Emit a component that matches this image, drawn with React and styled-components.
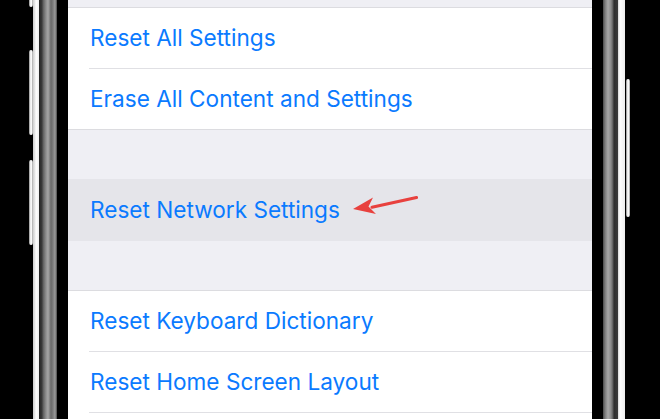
import React from "react";
import styled, { createGlobalStyle } from "styled-components";

const Global = createGlobalStyle`
  html, body { margin: 0; padding: 0; background: #000; }
  body { width: 660px; height: 419px; overflow: hidden; }
`;

const Page = styled.div`
  display: flex;
  width: 660px;
  height: 419px;
  background: #000;
  overflow: hidden;
`;

const LeftBezel = styled.div`
  position: relative;
  flex: 0 0 68px;
  height: 100%;
  background: linear-gradient(
    to right,
    #000 0px, #000 33px,
    #cfcfcf 33px, #e8e8e8 35px, #ffffff 36px, #f2f2f2 38.5px,
    #262626 39px, #3a3a3a 42px,
    #5c5c5c 43px, #8e8e8e 46px, #a6a6a6 48px, #6b6b6b 51px,
    #7d7d7d 53px, #9c9c9c 55px, #4a4a4a 57px,
    #000 57px, #000 68px
  );
`;

const RightBezel = styled.div`
  position: relative;
  flex: 0 0 68px;
  height: 100%;
  background: linear-gradient(
    to right,
    #000 0px, #000 11px,
    #4a4a4a 11px, #7a7a7a 13px, #a8a8a8 16px, #8a8a8a 19px, #5a5a5a 21px,
    #2e2e2e 22px, #3a3a3a 26px,
    #d6d6d6 26px, #ffffff 28px, #f0f0f0 32.5px,
    #000 33px, #000 68px
  );
`;

const SideButton = styled.div`
  position: absolute;
  left: ${(p) => p.$left}px;
  top: ${(p) => p.$top}px;
  width: 4px;
  height: ${(p) => p.$height}px;
  border-radius: 2px;
  background: linear-gradient(to right, #8a8a8a, #f4f4f4 40%, #ffffff 60%, #9a9a9a);
`;

const Screen = styled.div`
  flex: 0 0 524px;
  height: 100%;
  background: #efeff4;
  display: flex;
  flex-direction: column;
  font-family: Inter, "Liberation Sans", sans-serif;
`;

const Gap = styled.div`
  flex: 0 0 ${(p) => p.$h}px;
  background: #efeff4;
`;

const Group = styled.div`
  background: #fff;
  border-top: 1px solid #dcdce0;
  border-bottom: ${(p) => (p.$open ? "none" : "1px solid #dcdce0")};
  flex: ${(p) => (p.$open ? "1 1 auto" : "0 0 auto")};
  display: flex;
  flex-direction: column;
`;

const Row = styled.div`
  position: relative;
  flex-shrink: 0;
  height: ${(p) => p.$h || 60}px;
  display: flex;
  align-items: center;
  background: ${(p) => (p.$highlight ? "#e5e5ea" : "transparent")};
  border-bottom: ${(p) => (p.$sep ? "1px solid #e0e0e4" : "none")};
  margin-left: ${(p) => (p.$sep ? 21 : 0)}px;
  padding-left: ${(p) => (p.$sep ? 1 : 22)}px;
`;

const Label = styled.span`
  color: #0a7aff;
  font-size: 22.6px;
  line-height: 1;
  white-space: nowrap;
`;

const Arrow = styled.svg`
  position: absolute;
  left: 282px;
  top: 14px;
  overflow: visible;
`;

function SettingRow({ label, sep, highlight, h, children }) {
  return (
    <Row $sep={sep} $highlight={highlight} $h={h}>
      <Label>{label}</Label>
      {children}
    </Row>
  );
}

export default function App() {
  return (
    <>
      <Global />
      <Page>
        <LeftBezel>
          <SideButton $left={29} $top={-60} $height={67} />
          <SideButton $left={29} $top={50} $height={85} />
          <SideButton $left={29} $top={160} $height={85} />
        </LeftBezel>
        <Screen>
          <Gap $h={7} />
          <Group>
            <SettingRow label="Reset All Settings" sep />
            <SettingRow label="Erase All Content and Settings" />
          </Group>
          <Gap $h={49} />
          <SettingRow label="Reset Network Settings" highlight h={62}>
            <Arrow width="70" height="24" viewBox="0 0 70 24">
              <path d="M66.5 4.5 L22 14.2" stroke="#e8413e" strokeWidth="3.2" strokeLinecap="round" fill="none" />
              <polygon points="3,16 23,4.5 18.5,13.6 26,21" fill="#e8413e" />
            </Arrow>
          </SettingRow>
          <Gap $h={49} />
          <Group $open>
            <SettingRow label="Reset Keyboard Dictionary" sep />
            <SettingRow label="Reset Home Screen Layout" sep />
          </Group>
        </Screen>
        <RightBezel>
          <SideButton $left={34} $top={79} $height={138} />
        </RightBezel>
      </Page>
    </>
  );
}
